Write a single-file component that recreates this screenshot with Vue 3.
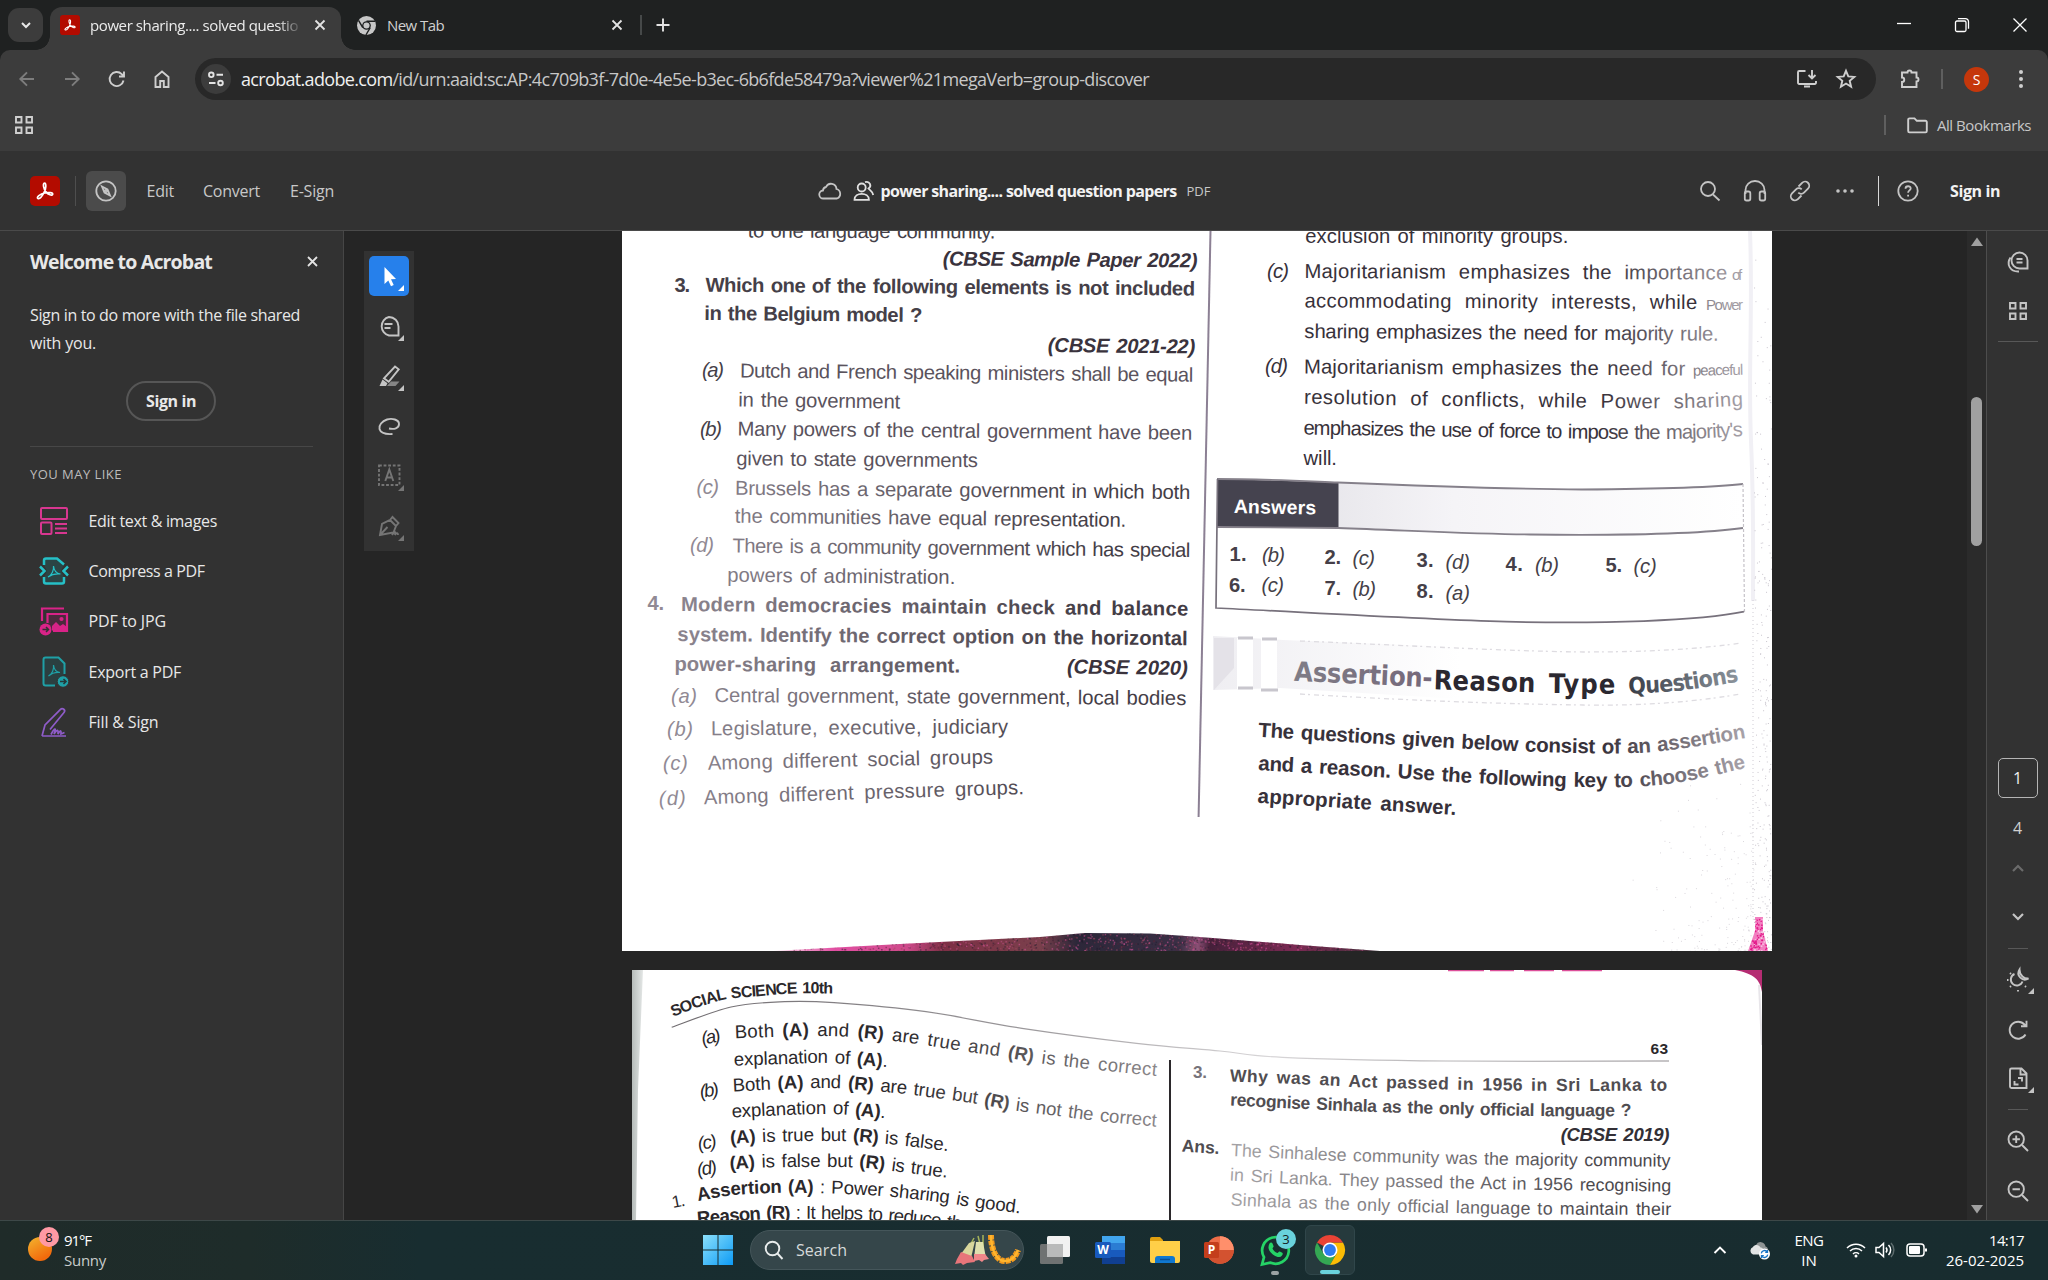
<script setup>
// Spreads an element's text over a given width through letter spacing.
const vFit = {
  mounted(el, { value }) {
    const w = el.getBoundingClientRect().width
    const n = el.textContent.length
    el.style.letterSpacing = ((value - w) / n).toFixed(3) + 'px'
  }
}

// Justifies a line of text along its baseline curve.
const vJustify = {
  mounted(el, { value }) {
    const natural = el.getComputedTextLength()
    const text = el.textContent
    const spaces = text.split(' ').length - 1
    const spare = value - natural
    const word = spaces ? Math.max((spare * 0.6) / spaces, 1.5) : 0
    el.style.wordSpacing = word + 'px'
    el.style.letterSpacing = (spare - word * spaces) / Math.max(1, text.length - 1) + 'px'
  }
}

function curve(p) {
  const pts = []
  for (let i = 0; i < p.length; i += 2) pts.push([p[i], p[i + 1]])
  let d = `M${pts[0][0]} ${pts[0][1]}`
  for (let i = 0; i < pts.length - 1; i++) {
    const a = pts[i - 1] || pts[i], b = pts[i], c = pts[i + 1], e = pts[i + 2] || c
    d += `C${b[0] + (c[0] - a[0]) / 6} ${b[1] + (c[1] - a[1]) / 6} ${c[0] - (e[0] - b[0]) / 6} ${c[1] - (e[1] - b[1]) / 6} ${c[0]} ${c[1]}`
  }
  const l = pts[pts.length - 1], k = pts[pts.length - 2]
  const len = Math.hypot(l[0] - k[0], l[1] - k[1])
  d += `L${l[0] + ((l[0] - k[0]) / len) * 14} ${l[1] + ((l[1] - k[1]) / len) * 14}`
  return d
}
function length(p) {
  let s = 0
  for (let i = 2; i < p.length; i += 2) s += Math.hypot(p[i] - p[i - 2], p[i + 1] - p[i - 1])
  return s
}
function build(prefix, rows) {
  return rows.map(([t, cls, p], i) => ({
    id: prefix + i, cls, d: curve(p), len: length(p),
    runs: t.split('*').map((s, k) => ({ s, bold: k % 2 === 1 })).filter(r => r.s)
  }))
}

const page1 = build('a', [
  ['to one language community.', '', [748, 237.5, 995, 238.5]],
  ['(CBSE Sample Paper 2022)', 'bi', [943, 265.5, 1197, 267.5]],
  ['3.', 'b', [674.5, 291.7, 690, 291.7]],
  ['Which one of the following elements is not included', 'b', [705.5, 291.7, 1195, 295.5]],
  ['in the Belgium model ?', 'b', [704.5, 320, 922, 322]],
  ['(CBSE 2021-22)', 'bi', [1048, 352, 1195, 353.5]],
  ['(a)', 'i', [702, 377, 724, 377]],
  ['Dutch and French speaking ministers shall be equal', 'up', [740, 377.5, 1193, 381.7]],
  ['in the government', 'up', [738.5, 406.5, 900, 408.5]],
  ['(b)', 'i', [700, 435.5, 722, 435.5]],
  ['Many powers of the central government have been', 'up', [737.6, 435.5, 1192, 439.8]],
  ['given to state governments', 'up', [736.5, 465.2, 977.5, 467.2]],
  ['(c)', 'i lt', [696.5, 494, 719, 494]],
  ['Brussels has a separate government in which both', 'fl', [735, 494.8, 1190, 499]],
  ['the communities have equal representation.', 'fl', [735, 522.7, 1126, 526.9]],
  ['(d)', 'i lt', [690, 551.7, 714, 551.7]],
  ['There is a community government which has special', 'fl', [732.5, 552.5, 1190, 557]],
  ['powers of administration.', 'fl', [727.5, 581.7, 955, 584]],
  ['4.', 'b lt', [647.5, 610.2, 664, 610.2]],
  ['Modern democracies maintain check and balance', 'b fl', [681, 611, 1188, 615.6]],
  ['system. Identify the correct option on the horizontal', 'b fl', [677.5, 641, 1187.5, 645.2]],
  ['power-sharing arrangement.', 'b fl', [674.5, 670.8, 960, 672.5]],
  ['(CBSE 2020)', 'bi', [1067, 673.5, 1187.5, 675]],
  ['(a)', 'i lt', [671, 702.5, 697, 702.5]],
  ['Central government, state government, local bodies', 'fl', [714.5, 702, 1186, 705]],
  ['(b)', 'i lt', [667, 735.6, 693, 735.6]],
  ['Legislature, executive, judiciary', 'fl', [711, 735.3, 1008, 733.4]],
  ['(c)', 'i lt', [663, 770.2, 688, 769.5]],
  ['Among different social groups', 'fl', [708, 769.7, 993, 763.5]],
  ['(d)', 'i lt', [659, 805.5, 686, 804.5]],
  ['Among different pressure groups.', 'fl', [704, 804.2, 1024, 794]],
  ['exclusion of minority groups.', 'dk', [1305.5, 243.3, 1568, 243.3]],
  ['(c)', 'i dk', [1267, 278.2, 1289, 278.2]],
  ['Majoritarianism emphasizes the importance', 'fr', [1304.5, 278, 1727, 279.5]],
  ['of', 'sm fr', [1732, 279.5, 1742, 279.5]],
  ['accommodating minority interests, while', 'dk', [1304.5, 307.5, 1697, 309]],
  ['Power', 'sm fr', [1706, 309.5, 1743, 309.5]],
  ['sharing emphasizes the need for majority rule.', 'fr', [1304.5, 338, 1718.5, 340.7]],
  ['(d)', 'i dk', [1265, 372.8, 1288, 372.8]],
  ['Majoritarianism emphasizes the need for', 'fr', [1304, 373.5, 1685, 375.5]],
  ['peaceful', 'sm fr', [1693, 375.7, 1743, 374.7]],
  ['resolution of conflicts, while Power sharing', 'fr', [1304, 403.7, 1640, 408.2, 1743, 405.7]],
  ["emphasizes the use of force to impose the majority's", 'fr', [1303.5, 434.5, 1640, 439, 1743, 436]],
  ['will.', 'dk', [1303.5, 465, 1337, 465]],
  ['Answers', 'b wh', [1233.7, 513, 1316, 514.5]],
  ['1.', 'b', [1229.5, 560.7, 1246.5, 560.7]], ['(b)', 'i', [1262, 561.5, 1285, 561.5]],
  ['2.', 'b', [1324.5, 563.7, 1341, 563.7]], ['(c)', 'i', [1352.5, 564.7, 1375, 564.7]],
  ['3.', 'b', [1416.5, 567.4, 1433.5, 567.4]], ['(d)', 'i', [1445.5, 568.7, 1470, 568.7]],
  ['4.', 'b', [1505.500, 570.5, 1522.6, 570.5]], ['(b)', 'i', [1535, 571.5, 1559, 571.5]],
  ['5.', 'b', [1605.500, 571.5, 1622, 571.5]], ['(c)', 'i', [1633.500, 572.5, 1656.6, 572.5]],
  ['6.', 'b', [1229, 591.500, 1245.500, 591.500]], ['(c)', 'i', [1261.500, 592.3, 1284, 592.3]],
  ['7.', 'b', [1324.500, 594.5, 1341, 594.5]], ['(b)', 'i', [1352.500, 595.7, 1376, 595.7]],
  ['8.', 'b', [1416.500, 598, 1433.500, 598]], ['(a)', 'i', [1445.500, 599.7, 1470, 599.7]],
  ['Assertion-', 'head pale', [1294, 680.7, 1432, 687.2]],
  ['Reason', 'head', [1433.5, 689.2, 1535, 692.4]],
  ['Type', 'head', [1549, 693, 1615, 693.7]],
  ['Questions', 'head soft', [1629, 694, 1685, 690, 1739, 681.5]],
  ['The questions given below consist of an assertion', 'b lg fr', [1258, 736.7, 1399, 745, 1533, 751.7, 1646, 752.5, 1746, 738]],
  ['and a reason. Use the following key to choose the', 'b lg fr', [1258, 770, 1395, 778, 1529, 785.7, 1655, 785.5, 1746, 768]],
  ['appropriate answer.', 'b lg dk', [1257.5, 802.7, 1455.6, 815]]
])

const page2 = build('b', [
  ['SOCIAL SCIENCE 10th', 'b cap', [673, 1016.7, 719.5, 1000.7, 759.7, 996, 794, 993.5, 833, 993.5]],
  ['(a)', 'i', [703, 1045, 721.5, 1041]],
  ['Both *(A)* and *(R)* are true and *(R)* is the correct', 'fp', [735, 1038.3, 806.8, 1036, 848.5, 1036.7, 884, 1040, 919.7, 1044.3, 960.6, 1050.7, 1001.5, 1056.7, 1036, 1062.7, 1091.5, 1069.3, 1156, 1076]],
  ['explanation of *(A)*.', '', [734, 1065.700, 784.6, 1064, 826.7, 1063, 887, 1067]],
  ['(b)', 'i', [701, 1098, 719.5, 1095]],
  ['Both *(A)* and *(R)* are true but *(R)* is not the correct', 'fp', [733, 1091.5, 801.8, 1088.3, 840, 1088.3, 873, 1091, 907, 1094.3, 946, 1099.3, 979.7, 1104.3, 1011, 1110, 1063, 1116.7, 1094.5, 1120.7, 1156, 1126.7]],
  ['explanation of *(A)*.', '', [732, 1117.5, 824.7, 1114, 885, 1118.3]],
  ['(c)', 'i', [699, 1150, 717.5, 1147]],
  ['*(A)* is true but *(R)* is false.', '', [730.5, 1144, 773, 1141.7, 844, 1141, 877, 1143.3, 897.5, 1145, 948, 1151]],
  ['(d)', 'i', [698, 1176, 717.5, 1173]],
  ['*(A)* is false but *(R)* is true.', '', [730, 1169.5, 773, 1167.3, 852, 1167.3, 884, 1170, 905, 1172.7, 947, 1177.7]],
  ['1.', 'n', [673, 1208, 686, 1205.5]],
  ['*Assertion (A)* : Power sharing is good.', '', [698, 1201, 734.8, 1195, 775, 1193, 809.5, 1193, 882, 1196, 949, 1203.3, 969, 1206.7, 1020, 1213.3]],
  ['*Reason (R)* : It helps to reduce the', '', [697.7, 1224.5, 756, 1219.8, 788, 1218.8, 865, 1219.8, 926, 1225, 970, 1231]],
  ['63', 'b tiny', [1650.500, 1053.7, 1668, 1053.7]],
  ['3.', 'b lt', [1193, 1078.3, 1207, 1078.3]],
  ['Why was an Act passed in 1956 in Sri Lanka to', 'b mid', [1230, 1081.5, 1309, 1084.5, 1376, 1087.7, 1521, 1090.7, 1667.3, 1090.7]],
  ['recognise Sinhala as the only official language ?', 'b mid', [1230, 1105.5, 1376, 1112, 1533.5, 1116, 1631.4, 1116]],
  ['(CBSE 2019)', 'bi', [1560.8, 1141, 1669.4, 1141]],
  ['Ans.', 'b mid', [1181.6, 1151.5, 1219, 1154]],
  ['The Sinhalese community was the majority community', 'fq', [1231, 1156, 1343.7, 1161, 1507, 1165, 1670, 1166.7]],
  ['in Sri Lanka. They passed the Act in 1956 recognising', 'fq', [1230, 1180.5, 1327, 1185.3, 1503, 1189.3, 1671, 1191.7]],
  ['Sinhala as the only official language to maintain their', 'fq', [1230.6, 1205.5, 1384.5, 1211.3, 1527, 1214.3, 1671, 1215]]
])
const headerLine = curve([671.7, 1027.3, 731, 1007, 784.6, 1001.7, 834, 1002.7, 926, 1011.7, 1022, 1028.3, 1136.6, 1043.3, 1220, 1051, 1282.4, 1057.3, 1445.7, 1061, 1655, 1061])

// Scanner grain, seeded so that it is the same on every load.
let seed = 7
const rnd = () => ((seed = (seed * 16807) % 2147483647) / 2147483647)
const many = (n, f) => Array.from({ length: n }, f)
const grain = [
  ...many(240, () => ({ x: 1754 + rnd() * 17, y: 231 + 720 * Math.sqrt(rnd()), c: '#c9c5cd' })),
  ...many(170, () => ({ x: 1754 - 140 * rnd() * rnd(), y: 951 - 180 * rnd() * rnd(), c: '#dad7dc' }))
]
const bandColors = ['#e857a8', '#5a2338', '#2a2233', '#a84a63', '#c8548e', '#1f1c2c', '#713045']
const bandGrain = many(1300, () => ({ x: 790 + rnd() * 580, y: 932 + rnd() * 19, c: bandColors[Math.floor(rnd() * 7)] }))
const pinkGrain = many(120, () => ({ x: 1749 + rnd() * 18, y: 918 + rnd() * 33, c: rnd() > 0.5 ? '#e3198a' : '#f8c4e4' }))

const suggestions = [
  { icon: 'edit', label: 'Edit text & images', w: 128.5 },
  { icon: 'compress', label: 'Compress a PDF', w: 116 },
  { icon: 'jpg', label: 'PDF to JPG', w: 77.5 },
  { icon: 'export', label: 'Export a PDF', w: 92.5 },
  { icon: 'sign', label: 'Fill & Sign', w: 70 }
]
</script>

<template>
  <div class="screen">
    <!-- tab strip -->
    <div class="tabs">
      <div class="tabsearch"><svg width="14" height="14" viewBox="0 0 14 14" class="ln w2"><path d="M3 5l4 4 4-4" /></svg></div>
      <div class="tab">
        <svg class="fav" width="20" height="20" viewBox="0 0 30 30"><rect width="30" height="30" rx="5" fill="#b30b00" /><path class="acro" d="M14.5 7.2c2 0 1.600 5.500-.3 9-1.800 3.700-4.600 6.900-6.300 6.200-2-1 2.300-4.500 6.800-5.400 3.900-.8 8.200-.6 8 1.300-.5 2-4.600.2-6.700-2.400-2.300-2.700-3.600-8.700-1.500-8.700z" /></svg>
        <div class="tabtitle"><span v-fit="208">power sharing.... solved questio</span></div>
        <svg class="tabx" width="12" height="12" viewBox="0 0 12 12"><path d="M1.500 1.500l9 9M10.500 1.500l-9 9" /></svg>
      </div>
      <div class="tab2">
        <svg width="19" height="19" viewBox="0 0 20 20"><circle cx="10" cy="10" r="10" fill="#c7c7c7" /><g stroke="#1f2121" stroke-width="1.500" fill="none"><path d="M10 5.500H19M6.100 12.200L1.600 4.500M13.900 12.200L9.400 20" /></g><circle cx="10" cy="10" r="4.600" fill="#1f2121" /><circle cx="10" cy="10" r="3.200" fill="#c7c7c7" /></svg>
        <span v-fit="57">New Tab</span>
        <svg class="tabx" width="12" height="12" viewBox="0 0 12 12"><path d="M1.500 1.500l9 9M10.500 1.500l-9 9" /></svg>
      </div>
      <i class="tabsep"></i>
      <svg class="plus" width="14" height="14" viewBox="0 0 14 14"><path d="M7 .5v13M.5 7h13" /></svg>
      <div class="winctl">
        <svg width="16" height="16" viewBox="0 0 16 16"><path d="M1 6.500h14" /></svg>
        <svg width="16" height="16" viewBox="0 0 16 16"><rect x="1.500" y="4" width="10.500" height="10.500" rx="1.500" /><path d="M4 1.700h7.500a3 3 0 013 3v7" /></svg>
        <svg width="16" height="16" viewBox="0 0 16 16"><path d="M1.500 1.500l13 13M14.500 1.500l-13 13" /></svg>
      </div>
    </div>

    <!-- address row -->
    <div class="navbg">
      <div class="nav">
        <div class="navicons">
          <svg class="dim" width="20" height="20" viewBox="0 0 20 20"><path d="M17 10H3.500M10 3.300L3.300 10l6.700 6.700" /></svg>
          <svg class="dim" width="20" height="20" viewBox="0 0 20 20"><path d="M3 10h13.500M10 3.300l6.700 6.700-6.700 6.700" /></svg>
          <svg width="20" height="20" viewBox="0 0 20 20"><path d="M16.500 11.500a7 7 0 11-1.800-6.300L17 7.500M17 2.500v5h-5" /></svg>
          <svg width="20" height="20" viewBox="0 0 20 20"><path d="M3.500 8L10 2.500 16.500 8v10h-4.700v-6H8.200v6H3.500z" /></svg>
        </div>
        <div class="url">
          <div class="site"><svg width="18" height="18" viewBox="0 0 18 18"><circle cx="4.300" cy="4.800" r="2.300" /><path d="M9.500 4.800H16M2 13h6.500" /><circle cx="13.500" cy="13" r="2.300" /></svg></div>
          <span v-fit="908"><b>acrobat.adobe.com</b>/id/urn:aaid:sc:AP:4c709b3f-7d0e-4e5e-b3ec-6b6fde58479a?viewer%21megaVerb=group-discover</span>
          <div class="urlicons">
            <svg width="22" height="20" viewBox="0 0 22 20"><path d="M9.500 2H3.200A1.200 1.200 0 002 3.200v10.600A1.200 1.200 0 003.200 15h15.600a1.200 1.200 0 001.200-1.200V12M16 1v8M12.500 6L16 9.500 19.500 6M8 17.500h6" /></svg>
            <svg width="20" height="20" viewBox="0 0 20 20"><path d="M10 1.800l2.300 5.600 6 .5-4.600 3.900 1.400 5.900L10 14.500l-5.100 3.200 1.400-5.900L1.700 7.900l6-.5z" /></svg>
          </div>
        </div>
        <svg class="puzzle" width="22" height="22" viewBox="0 0 22 22"><path d="M3 4.500h5.500a2 2 0 014 0H17.500v5a2 2 0 010 4v5.500H3v-5a2.200 2.200 0 000-4.500z" /></svg>
        <i class="vsep"></i>
        <div class="avatar">S</div>
        <svg class="kebab" width="6" height="20" viewBox="0 0 6 20"><circle cx="3" cy="3" r="2" /><circle cx="3" cy="10" r="2" /><circle cx="3" cy="17" r="2" /></svg>
      </div>
      <div class="marks">
        <svg class="apps" width="20" height="20" viewBox="0 0 20 20"><path d="M2 2h5.500v5.500H2zM12.500 2H18v5.500h-5.500zM2 12.500h5.500V18H2zM12.500 12.500H18V18h-5.500z" /></svg>
        <i class="vsep"></i>
        <svg class="folder" width="21" height="17" viewBox="0 0 21 17"><path d="M1.200 14V2.700A1.300 1.300 0 012.500 1.400h5l2.300 2.400h8.700a1.300 1.300 0 011.300 1.300V14a1.400 1.400 0 01-1.300 1.400h-16A1.400 1.400 0 011.200 14z" /></svg>
        <span v-fit="94">All Bookmarks</span>
      </div>
    </div>

    <!-- Acrobat header -->
    <div class="ahead">
      <div class="aleft">
        <svg width="30" height="30" viewBox="0 0 30 30"><rect width="30" height="30" rx="5" fill="#b30b00" /><path class="acro" d="M14.500 7.200c2 0 1.600 5.500-.3 9-1.800 3.700-4.600 6.900-6.300 6.200-2-1 2.300-4.500 6.800-5.400 3.900-.8 8.200-.6 8 1.300-.5 2-4.600.2-6.700-2.400-2.300-2.700-3.600-8.700-1.500-8.700z" /></svg>
        <i></i>
        <div class="compass"><svg width="22" height="22" viewBox="0 0 22 22"><circle cx="11" cy="11" r="9.700" /><path d="M7 6.500l5.500 3 2.500 6-5.500-3z" /><circle cx="11" cy="11" r="1.200" /></svg></div>
        <span class="m1" v-fit="27.500">Edit</span><span class="m2" v-fit="57">Convert</span><span class="m3" v-fit="44">E-Sign</span>
      </div>
      <div class="acenter">
        <svg width="24" height="20" viewBox="0 0 24 20"><path d="M5.500 17.500a4 4 0 01-.5-8 3.800 3.800 0 013-3.500 5.500 5.500 0 0110.500 2 5 5 0 01.5 9.500z" /></svg>
        <svg class="ppl" width="22" height="22" viewBox="0 0 22 22"><circle cx="8.700" cy="7.500" r="4" /><path d="M1.500 19.800c0-8 14.400-8 14.400 0zM12 2.200c5-1.700 7 4.200 3.500 6.300 1.500 2 4 2.500 4.700 6.500" /></svg>
        <b v-fit="296">power sharing.... solved question papers</b>
        <small v-fit="24">PDF</small>
      </div>
      <div class="aright">
        <svg width="22" height="22" viewBox="0 0 22 22"><circle cx="9" cy="9" r="7" /><path d="M14 14.500l6.500 6" /></svg>
        <svg width="24" height="22" viewBox="0 0 24 22"><path d="M2.500 14V10a9.500 9 0 0119 0v4" /><rect x="1.800" y="11.500" width="5.500" height="9" rx="1.800" /><rect x="16.700" y="11.500" width="5.500" height="9" rx="1.800" /></svg>
        <svg width="22" height="22" viewBox="0 0 22 22"><path d="M9.500 6.500l3.600-3.700a4 4 0 015.900 5.800l-4 4a4 4 0 01-5.700 0M12.500 15.500l-3.600 3.700a4 4 0 01-5.900-5.800l4-4a4 4 0 015.700 0" /></svg>
        <svg class="dots" width="20" height="6" viewBox="0 0 20 6"><circle cx="3" cy="3" r="1.800" /><circle cx="10" cy="3" r="1.800" /><circle cx="17" cy="3" r="1.800" /></svg>
        <i></i>
        <svg class="help" width="22" height="22" viewBox="0 0 22 22"><circle cx="11" cy="11" r="9.700" /><path d="M8.500 8.700c0-3.300 5.200-3.200 5.200-.2 0 1.900-2.600 2-2.600 4.200M11.100 14.800v1.700" /></svg>
        <b v-fit="50">Sign in</b>
      </div>
    </div>

    <div class="body">
      <!-- welcome panel -->
      <aside class="panel">
        <div class="ptitle"><b v-fit="182">Welcome to Acrobat</b>
          <svg class="tabx" width="11" height="11" viewBox="0 0 11 11"><path d="M1 1l9 9M10 1l-9 9" /></svg>
        </div>
        <p><span v-fit="270">Sign in to do more with the file shared</span><br><span v-fit="66">with you.</span></p>
        <div class="signin"><b v-fit="50">Sign in</b></div>
        <hr>
        <h4><span v-fit="92">YOU MAY LIKE</span></h4>
        <div v-for="s in suggestions" :key="s.icon" class="sug">
          <svg v-if="s.icon === 'edit'" width="30" height="30" viewBox="0 0 30 30" stroke="#d83790" stroke-width="2" fill="#4a3040"><rect x="2" y="2" width="26" height="11" rx="1" /><rect x="2" y="16.500" width="10.500" height="11.500" rx="1" /><path d="M16 18h12M16 22.500h12M16 27h12" /></svg>
          <svg v-else-if="s.icon === 'compress'" width="30" height="30" viewBox="0 0 30 30" stroke="#26c0c7" stroke-width="2" fill="none"><path d="M5 9V4.500A2 2 0 017 2.500h11l7 6L22 15l3 6v4.500a2 2 0 01-2 2H7a2 2 0 01-2-2V21l3-6z" fill="#2b4445" stroke="none" /><path d="M5 9V4.500A2 2 0 017 2.500h11l7 6M5 21v4.500a2 2 0 002 2h16a2 2 0 002-2V21" stroke-width="2.500" /><path d="M1 10.500L5.500 15 1 19.500M29 10.500L24.500 15 29 19.500" stroke-width="2.500" /><path d="M9 21c4-2 6-7 5.500-11 .5 5 3 7.500 7 8-4-.5-9 .5-12.500 3z" stroke-width="1.200" /></svg>
          <svg v-else-if="s.icon === 'jpg'" width="30" height="30" viewBox="0 0 30 30" stroke="#d92388" stroke-width="2.200" fill="none"><path d="M3 15V2.500h22" /><path d="M8.500 17V8H28v17H14" fill="#4b2a3d" /><path d="M13 24v-4l4-4 4 4 3-2 4 3v4H14z" fill="#d92388" stroke="none" /><circle cx="22.500" cy="13" r="1" fill="#d92388" /><circle cx="6.500" cy="23.500" r="6" fill="#d92388" stroke="none" /><path d="M3.500 23.500h6M7 21l2.500 2.500L7 26" stroke="#323232" stroke-width="1.500" /></svg>
          <svg v-else-if="s.icon === 'export'" width="30" height="32" viewBox="0 0 30 32" stroke="#1fa0a6" stroke-width="2" fill="none"><path d="M16 29.500H6.500a2 2 0 01-2-2V3.500a2 2 0 012-2h13l6 6V18" fill="#2b3f40" /><path d="M9.500 20c4-2 5.500-7 5-11 .5 5 2.500 7 6.500 7.500-4-.5-8.500 1-11.500 3.500z" stroke-width="1.200" /><circle cx="24" cy="25.500" r="5.800" fill="#1fa0a6" stroke="#323232" stroke-width="1" /><path d="M21 25.500h6M24.500 23l2.500 2.500-2.500 2.500" stroke="#26393a" stroke-width="1.600" /></svg>
          <svg v-else width="30" height="30" viewBox="0 0 30 30" stroke="#8f5cc9" stroke-width="1.700" fill="none"><path d="M3 29l3-11L21.500 2.300c2-2 5.500.8 3.500 3.200L11 22.500M3 29h24" /><path d="M12 27.500c3-6 5-7 4-3.500l-1 3c2-3 4-5 4-2.500v2.500c1.500-3 3-4 3-2v2l3.500-1.500" stroke-width="1.700" /></svg>
          <span v-fit="s.w">{{ s.label }}</span>
        </div>
      </aside>

      <!-- document -->
      <main class="viewer">
        <div class="tools">
          <div class="tool on"><svg width="40" height="40" viewBox="0 0 40 40"><path d="M15.500 11v17l3.800-3.600 2.700 5.800 2.700-1.200-2.700-5.700 5-.3z" fill="#fff" /><path d="M35 29v6h-6z" fill="#fff" /></svg></div>
          <div class="tool"><svg width="40" height="40" viewBox="0 0 40 40" class="tl"><path d="M20 11a9.500 9.500 0 019.500 9.500v9H20A9.500 9.500 0 0120 11zM15.500 18h8M15.500 22h6" /><path class="tri" d="M35 29v6h-6z" /></svg></div>
          <div class="tool"><svg width="40" height="40" viewBox="0 0 40 40" class="tl"><path d="M26 10.500l3.700 2.800-10 12.500-4.700-3.500z" /><path class="tri" d="M13.500 23.500l5 3.700-1.500 2.800h-6.500z" /><path d="M22 25.500h8.500l-4 4.500H18z" fill="#858585" stroke="none" /><path class="tri" d="M35 29v6h-6z" /></svg></div>
          <div class="tool"><svg width="40" height="40" viewBox="0 0 40 40" class="tl"><path d="M20 22.500c5 1 10 0 10-4.500S23 12 18 13.500s-8.500 6-7.500 9.500 5.500 5.500 13 5" /></svg></div>
          <div class="tool off"><svg width="40" height="40" viewBox="0 0 40 40" class="tl"><rect x="10" y="9.500" width="20.500" height="19.500" stroke-dasharray="2.800 1.800" /><path d="M16.300 25l4-11.500 4 11.500M17.500 21.500h5.500" /><path class="tri" d="M35 29v6h-6z" /></svg></div>
          <div class="tool off"><svg width="40" height="40" viewBox="0 0 40 40" class="tl"><path d="M11 29l2-11 8-4 6 6-2.500 6.500zM11 29l7.500-8M21 14l2.500-3 6 6-2.500 3M23 29c3-5 4-3 3 0 2-3 3-2 3 0" /><path class="tri" d="M35 29v6h-6z" /></svg></div>
        </div>

        <div class="pages">
          <svg class="page" width="1150" height="720" viewBox="622 231 1150 720">
            <defs>
              <linearGradient id="fl" gradientUnits="userSpaceOnUse" x1="690" x2="1100" y1="0" y2="0"><stop offset="0" stop-color="#8a838d" /><stop offset="1" stop-color="#433d45" /></linearGradient>
              <linearGradient id="fr" gradientUnits="userSpaceOnUse" x1="1600" x2="1745" y1="0" y2="0"><stop offset="0" stop-color="#37313a" /><stop offset="1" stop-color="#a8a3aa" /></linearGradient>
              <linearGradient id="band"><stop offset="0" stop-color="#fbe3f0" /><stop offset=".1" stop-color="#e24fa3" /><stop offset=".22" stop-color="#cf4a8b" /><stop offset=".28" stop-color="#7d2f45" /><stop offset=".44" stop-color="#7a404c" /><stop offset=".5" stop-color="#2c2739" /><stop offset=".67" stop-color="#3a2f45" /><stop offset=".7" stop-color="#8a4f74" /><stop offset=".72" stop-color="#45203a" /><stop offset=".86" stop-color="#7c2a54" /><stop offset="1" stop-color="#40303a" /></linearGradient>
              <linearGradient id="ans"><stop offset="0" stop-color="#dddce2" /><stop offset=".45" stop-color="#f5f4f7" /><stop offset="1" stop-color="#fff" /></linearGradient>
              <linearGradient id="ttb"><stop offset="0" stop-color="#efeef2" /><stop offset="1" stop-color="#fff" /></linearGradient>
              <linearGradient id="ttl" gradientUnits="userSpaceOnUse" x1="1295" x2="1432" y1="0" y2="0"><stop offset="0" stop-color="#7f7c86" /><stop offset="1" stop-color="#75687a" /></linearGradient>
              <linearGradient id="ttr" gradientUnits="userSpaceOnUse" x1="1629" x2="1739" y1="0" y2="0"><stop offset="0" stop-color="#3a3e48" /><stop offset="1" stop-color="#8c949c" /></linearGradient>
              <clipPath id="bandclip"><path d="M773 951L900 944 1040 937 1085 933 1150 933.500 1200 937 1300 945 1380 951z" /></clipPath>
              <clipPath id="pinkclip"><path d="M1755 917h8v14l5 20h-20l7-20z" /></clipPath>
            </defs>
            <rect x="622" y="231" width="1150" height="720" fill="#fff" />
            <path d="M1750 231c3 80-2 140 1 210s2 120 2 160" stroke="#f1f0f5" stroke-width="4" fill="none" />
            <path d="M1753 600V920" stroke="#cfccd4" stroke-width="1" stroke-dasharray="1 3" />
            <rect v-for="(g, i) in grain" :key="'g' + i" :x="g.x" :y="g.y" width="1" height="1" :fill="g.c" />
            <path d="M1210.500 231L1198.600 817" stroke="#8c8094" stroke-width="2" />
            <path d="M1217 480C1260 480 1300 482 1338 483 1420 486 1510 488 1582 488.500 1650 488 1710 487 1743 484V528C1650 536 1560 535.500 1530 534.500L1338 528z" fill="url(#ans)" />
            <path d="M1217 479L1338.500 482.500V528L1217 527z" fill="#45434f" />
            <path d="M1217 479C1260 479 1300 481 1338 482.500 1420 486 1510 489 1582 489.500 1650 489 1710 488 1743 484M1217 527L1338 528C1420 531 1480 534 1530 534.500 1620 535.500 1700 534 1743 528" stroke="#85808a" stroke-width="1.800" fill="none" />
            <path d="M1217.500 479L1216 608C1300 612 1420 619 1506 621.700 1600 624 1700 621 1744 611.700" stroke="#77717c" stroke-width="1.700" fill="none" />
            <path d="M1743 484L1744.500 612" stroke="#c5c2c8" stroke-width="1.200" stroke-dasharray="3 2" />
            <path d="M1213 636L1283 640 1460 647 1460 699 1280 688 1213 690z" fill="url(#ttb)" />
            <path d="M1214 638h20v30l-20 22z" fill="#e4e2e8" />
            <rect x="1237" y="638" width="16" height="51" fill="#fff" /><rect x="1261" y="638" width="16" height="51" fill="#fff" />
            <path d="M1238 638h15M1262 639h15M1238 688h15M1261 690h17" stroke="#c8c6cd" stroke-width="3" />
            <path d="M1300 641C1400 645 1500 651 1583 652 1650 652 1700 649 1741 643M1300 694C1400 700 1500 704 1583 705 1650 706 1700 701 1740 694" stroke="#dedce1" stroke-width="1.300" stroke-dasharray="5 3 2 4" fill="none" />
            <g clip-path="url(#bandclip)"><rect x="773" y="930" width="607" height="22" fill="url(#band)" /><rect v-for="(g, i) in bandGrain" :key="'b' + i" :x="g.x" :y="g.y" width="1.500" height="1.500" :fill="g.c" opacity=".5" /></g>
            <g clip-path="url(#pinkclip)"><rect x="1745" y="915" width="25" height="36" fill="#f27fc0" /><rect v-for="(g, i) in pinkGrain" :key="'p' + i" :x="g.x" :y="g.y" width="1.500" height="1.500" :fill="g.c" /></g>
            <g class="scan">
              <template v-for="l in page1" :key="l.id"><path :id="l.id" :d="l.d" fill="none" /><text v-justify="l.len" :class="l.cls"><textPath :href="'#' + l.id"><tspan v-for="(r, k) in l.runs" :key="k" :class="{ b: r.bold }">{{ r.s }}</tspan></textPath></text></template>
            </g>
          </svg>
          <svg class="page p2" width="1130" height="250" viewBox="632 970 1130 250">
            <defs>
              <linearGradient id="fp" gradientUnits="userSpaceOnUse" x1="900" x2="1160" y1="0" y2="0"><stop offset="0" stop-color="#2b282b" /><stop offset="1" stop-color="#8b888b" /></linearGradient>
              <linearGradient id="fq" gradientUnits="userSpaceOnUse" x1="1230" x2="1600" y1="0" y2="0"><stop offset="0" stop-color="#a5a3a6" /><stop offset="1" stop-color="#4a474c" /></linearGradient>
              <linearGradient id="edge"><stop offset="0" stop-color="#b6bcba" /><stop offset="1" stop-color="#e4e7e6" /></linearGradient>
              <linearGradient id="rule" gradientUnits="userSpaceOnUse" x1="672" x2="1668" y1="0" y2="0"><stop offset="0" stop-color="#6f6b6f" /><stop offset=".35" stop-color="#9a979a" /><stop offset=".6" stop-color="#d8d6d8" /><stop offset=".8" stop-color="#b4b2b4" /><stop offset="1" stop-color="#8e8a8e" /></linearGradient>
            </defs>
            <rect x="632" y="970" width="1130" height="250" fill="#fff" />
            <path d="M632 970h11l-5 120-2 130h-4z" fill="url(#edge)" />
            <path d="M1448 970.500h36M1490 970.500h24M1524 970.500h30M1562 970.500h40" stroke="#dd4f9a" stroke-width="1.500" />
            <path d="M1735 970h27v22c-2-12-7-18-27-22z" fill="#b52c72" />
            <path d="M1759 985l3 60" stroke="#e8e6ea" stroke-width="2" />
            <path :d="headerLine" stroke="url(#rule)" stroke-width="1.200" fill="none" />
            <path d="M1170 1060V1220" stroke="#2b282b" stroke-width="2" />
            <g class="scan second">
              <template v-for="l in page2" :key="l.id"><path :id="l.id" :d="l.d" fill="none" /><text v-justify="l.len" :class="l.cls"><textPath :href="'#' + l.id"><tspan v-for="(r, k) in l.runs" :key="k" :class="{ b: r.bold }">{{ r.s }}</tspan></textPath></text></template>
            </g>
          </svg>
        </div>
        <div class="scroll">
          <svg width="14" height="12" viewBox="0 0 14 12"><path d="M7 1.500L13 10H1z" /></svg>
          <i></i>
          <svg width="14" height="12" viewBox="0 0 14 12"><path d="M7 10.500L13 2H1z" /></svg>
        </div>
      </main>

      <!-- right rail -->
      <aside class="rail">
        <svg class="r-com" width="22" height="22" viewBox="0 0 22 22"><path d="M12.500 1.500A8 8 0 0120.500 9.500v8h-8a8 8 0 010-16zM9.500 8h6M9.500 11.500h6" /><path d="M3.500 6.500C-1 13 3 21 12 20.500" /></svg>
        <svg class="r-grid" width="20" height="20" viewBox="0 0 20 20"><path d="M2 2h5.500v5.500H2zM12.500 2H18v5.500h-5.500zM2 12.500h5.500V18H2zM12.500 12.500H18V18h-5.500z" /></svg>
        <i class="wide"></i>
        <div class="pageno">1</div>
        <div class="total">4</div>
        <svg class="r-up" width="14" height="10" viewBox="0 0 14 10"><path d="M2 8l5-5 5 5" /></svg>
        <svg class="r-dn" width="14" height="10" viewBox="0 0 14 10"><path d="M2 2l5 5 5-5" /></svg>
        <i class="s1"></i>
        <svg class="r-sun" width="34" height="28" viewBox="0 0 34 28"><path d="M13.500 8a6 6 0 108 7.500" /><path d="M18.500 3.500a6.500 6.500 0 009 9c-4 .5-9-3-9-9z" /><path d="M6 14h1.500M9 7l1 1M9 21l1-1M17 24v1.500M24 20l1 1" /><path class="tri" d="M33 22v6h-6z" /></svg>
        <svg class="r-rot" width="22" height="22" viewBox="0 0 22 22"><path d="M18.500 15.500a8.500 8.500 0 11-1-10L19.500 7M19.500 1.800v5.500H14" /></svg>
        <svg class="r-fit" width="34" height="28" viewBox="0 0 34 28"><path d="M10.500 3.500h10l5 5v14.500h-1.500H10.500A1.500 1.500 0 019 21.500V5a1.500 1.500 0 011.500-1.500zM19.500 4v5.500h5.500M17 13h4v3.500M17.500 19.500h-4V16" /><path class="tri" d="M33 22v6h-6z" /></svg>
        <i class="s2"></i>
        <svg class="r-zi" width="22" height="22" viewBox="0 0 22 22"><circle cx="9.200" cy="9.200" r="7.700" /><path d="M15 15l6 6M5.500 9.200h7.400M9.200 5.500v7.400" /></svg>
        <svg class="r-zo" width="22" height="22" viewBox="0 0 22 22"><circle cx="9.200" cy="9.200" r="7.700" /><path d="M15 15l6 6M5.500 9.200h7.400" /></svg>
      </aside>
    </div>

    <!-- taskbar -->
    <footer class="task">
      <div class="weather">
        <div class="sun"><em>8</em></div>
        <div class="wtext"><span v-fit="27">91°F</span><br><span class="g" v-fit="42">Sunny</span></div>
      </div>
      <div class="center">
        <svg width="30" height="30" viewBox="0 0 30 30"><defs><linearGradient id="win" x1="0" y1="0" x2="30" y2="30" gradientUnits="userSpaceOnUse"><stop offset="0" stop-color="#8be0fb" /><stop offset="1" stop-color="#0d9bf5" /></linearGradient></defs><path d="M0 0h14.500v14.500H0zM15.500 0H30v14.500H15.500zM0 15.500h14.500V30H0zM15.500 15.500H30V30H15.500z" fill="url(#win)" /></svg>
        <div class="search">
          <svg width="20" height="20" viewBox="0 0 20 20"><circle cx="8.500" cy="8.500" r="6.800" /><path d="M13.500 13.500l5 5.500" /></svg>
          <span v-fit="51">Search</span>
          <svg class="flowers" width="66" height="32" viewBox="0 0 66 32">
            <path d="M20 4L14 15M24 2l3 12M29 1v13" stroke="#a6b45a" stroke-width="1.500" />
            <path d="M15 9l6-2-4 17-10-4z" fill="#d9d79c" /><path d="M22 8h7l3 16h-12z" fill="#dfe0ae" />
            <path d="M7 18l11 4 3 6-8 1-4 2-2-2-6 1 2-5z" fill="#e8757a" /><path d="M20 20h11l4 5-5 1-2 2-3-2-5 1z" fill="#f0878a" />
            <path d="M37 1c0 14 5 26 14 26 7 0 11-5 13-11" stroke="#f39a1d" stroke-width="6" fill="none" stroke-dasharray="4.500 1" /><path d="M37 1c0 14 5 26 14 26 7 0 11-5 13-11" stroke="#ffb52e" stroke-width="2.500" fill="none" />
          </svg>
        </div>
        <svg class="tv" width="30" height="28" viewBox="0 0 30 28"><rect x="7" y="0" width="23" height="21" rx="1.500" fill="#f1f1f1" /><rect x="0" y="8" width="23" height="20" rx="1.500" fill="#6f7272" /><path d="M7 8h16v13H7z" fill="#b9baba" /></svg>
        <svg class="word" width="30" height="28" viewBox="0 0 30 28"><path d="M7 0h23v7H7z" fill="#41a5ee" /><path d="M7 7h23v7H7z" fill="#2b7cd3" /><path d="M7 14h23v7H7z" fill="#185abd" /><path d="M7 21h23v7H7z" fill="#103f91" /><rect y="6" width="16" height="16" rx="1.500" fill="#185abd" /><text x="8" y="18" text-anchor="middle">W</text></svg>
        <svg class="exp" width="30" height="28" viewBox="0 0 30 28"><path d="M0 3a2 2 0 012-2h8l3 3v4H0z" fill="#e0a010" /><path d="M0 5h30v20a2 2 0 01-2 2H2a2 2 0 01-2-2z" fill="#ffcf48" /><path d="M5 27v-4a3 3 0 013-3h14a3 3 0 013 3v4z" fill="#1078d0" /><path d="M10 23.500h10" stroke="#0a4f94" stroke-width="1.500" /></svg>
        <svg class="ppt" width="30" height="28" viewBox="0 0 30 28"><circle cx="16" cy="14" r="13.800" fill="#ed6c47" /><path d="M16 .2A13.800 13.800 0 0129.800 14H16z" fill="#ff8f6b" /><path d="M2.200 14h27.600A13.800 13.800 0 012.200 14z" fill="#d35230" /><rect y="6" width="15" height="16" rx="1.500" fill="#c43e1c" /><text x="7.500" y="18" text-anchor="middle">P</text></svg>
        <div class="wa">
          <svg width="30" height="31" viewBox="0 0 30 31"><path d="M2 29.500l2-7.300A13.300 13.300 0 1110 27.600z" fill="none" stroke="#25d366" stroke-width="2.700" /><path d="M9.500 8.500c1-1.500 2.500-1 3 0l1 2.500c.5 1-1 1.500-1 2.500 1 2.300 2.500 3.600 4.800 4.500 1 0 1.500-2 2.500-1.500l2.500 1.200c1.300.8-.3 4-3 4.300-5 .3-11.300-6-10.800-10 .1-1.500.5-2.700 1-3.500z" fill="#25d366" /></svg>
          <em>3</em><i></i>
        </div>
        <div class="chrome">
          <svg width="30" height="30" viewBox="0 0 30 30"><path d="M2 7.500L8.500 18.700 15 15v0L21.500 18.700 15 30A15 15 0 012 7.500z" fill="#34a853" /><path d="M15 7.500h13A15 15 0 0115 30l6.500-11.300z" fill="#fbbc05" /><path d="M2 7.500A15 15 0 0128 7.500H15L8.500 11z" fill="#ea4335" /><circle cx="15" cy="15" r="7.500" fill="#fff" /><circle cx="15" cy="15" r="5.900" fill="#2e7bf0" /></svg><i></i>
        </div>
      </div>
      <div class="tray">
        <svg class="caret" width="14" height="10" viewBox="0 0 14 10"><path d="M1.500 8L7 2.500 12.500 8" /></svg>
        <svg class="cloud" width="22" height="20" viewBox="0 0 22 20"><path d="M7 5a5 5 0 019.500 1.500c3.500.5 3 6.500 0 6.500z" fill="#8f9494" /><path d="M4 14.500a4 4 0 010-7.500c2-3 6-2.500 7.500.5 4 0 4 7 0 7z" fill="#e2e4e4" /><circle cx="15.500" cy="14" r="5.500" fill="#fff" /><path d="M12.300 13.300a3.300 3.300 0 016-1.300M18.700 14.700a3.300 3.300 0 01-6 1.300M18.500 10v2.300h-2.300M12.500 18v-2.300h2.300" stroke="#1673c5" stroke-width="1.300" fill="none" /></svg>
        <div class="lang"><span v-fit="29">ENG</span><br>IN</div>
        <svg class="wifi" width="20" height="16" viewBox="0 0 20 16"><path d="M1 6a12.500 12.500 0 0118 0M4 9a8.400 8.400 0 0112 0M7 12a4.300 4.300 0 016 0" /><circle cx="10" cy="14" r="1.500" fill="#fff" stroke="none" /></svg>
        <svg class="vol" width="20" height="16" viewBox="0 0 20 16"><path d="M1 5.500h3L8.500 1.500v13L4 10.500H1zM11 5.500a4 4 0 010 5M13.500 3a7 7 0 010 10" /><path d="M16 1a10 10 0 010 14" opacity=".3" /></svg>
        <svg class="bat" width="21" height="14" viewBox="0 0 21 14"><rect x="1" y="1" width="17" height="12" rx="3" /><rect x="3" y="3" width="11" height="8" rx="1" fill="#fff" stroke="none" /><path d="M20 5.500v3" stroke-width="2" /></svg>
        <div class="clock"><span v-fit="35">14:17</span><br><span v-fit="78">26-02-2025</span></div>
      </div>
    </footer>
  </div>
</template>

<style>
html, body { margin: 0; overflow: hidden; background: #252525; }
</style>

<style scoped>
* { box-sizing: border-box; }
.screen { width: 2048px; height: 1280px; display: flex; flex-direction: column; overflow: hidden; font-family: "Open Sans", "Noto Sans", sans-serif; color: #e3e3e3; }
svg { display: block; flex: none; fill: none; overflow: visible; }
i, em { font-style: normal; flex: none; }
span, b, small { white-space: nowrap; }

.tabs { height: 50px; flex: none; display: flex; background: #1f2121; padding-left: 8px; align-items: flex-start; position: relative; z-index: 1; }
.tabsearch { width: 35px; height: 34px; margin-top: 8px; border-radius: 11px; background: #3c3c3c; display: flex; align-items: center; justify-content: center; }
.tabsearch svg { stroke: #e8e8e8; stroke-width: 2; }
.tab { position: relative; width: 291px; height: 43px; margin: 7px 0 0 7px; border-radius: 12px 12px 0 0; background: #3c3c3c; display: flex; align-items: center; padding: 0 0 7px 10px; }
.tab::before, .tab::after { content: ""; position: absolute; bottom: 0; width: 14px; height: 14px; }
.tab::before { left: -14px; background: radial-gradient(circle at 0 0, transparent 13.5px, #3c3c3c 14px); }
.tab::after { right: -14px; background: radial-gradient(circle at 100% 0, transparent 13.5px, #3c3c3c 14px); }
.acro { stroke: #fff; stroke-width: 1.7; fill: none; }
.tabtitle { width: 209px; margin-left: 10px; font-size: 15px; color: #ececec; -webkit-mask-image: linear-gradient(90deg, #000 90%, rgba(0,0,0,.15)); mask-image: linear-gradient(90deg, #000 90%, rgba(0,0,0,.15)); }
.tab .tabx { margin-left: 15px; }
.tabx { stroke: #e3e3e3; stroke-width: 1.8; }
.tab2 { width: 283px; height: 36px; margin: 7px 0 0 16px; display: flex; align-items: center; font-size: 15px; color: #d0d0d0; }
.tab2 span { margin-left: 11px; }
.tab2 .tabx { margin-left: auto; margin-right: 17px; }
.tabsep { width: 2px; height: 20px; margin-top: 15px; background: #464949; }
.plus { margin: 18px 0 0 14px; stroke: #e3e3e3; stroke-width: 1.9; }
.winctl { margin-left: auto; padding-right: 20px; display: flex; gap: 42px; margin-top: 17px; }
.winctl svg { stroke: #fff; stroke-width: 1.3; }

.navbg { height: 101px; flex: none; background: #3c3c3c; border-radius: 10px 10px 0 0; box-shadow: 0 -8px 0 0 #1f2121; position: relative; z-index: 0; }
.nav { display: flex; align-items: center; height: 58px; }
.navicons { display: flex; width: 195px; padding-left: 17px; gap: 25px; }
.navicons svg, .url svg, .puzzle, .apps, .folder { stroke: #cfcfcf; stroke-width: 1.9; }
.navicons .dim { stroke: #7d7d7d; }
.url { width: 1681px; height: 42px; border-radius: 21px; background: #282828; display: flex; align-items: center; padding: 0 20px 0 6px; font-size: 18px; color: #c7c7c7; }
.url b { font-weight: 400; color: #f0f0f0; }
.site { width: 30px; height: 30px; border-radius: 50%; background: #3c3c3c; display: flex; align-items: center; justify-content: center; margin-right: 10px; }
.site svg { stroke: #e3e3e3; }
.urlicons { margin-left: auto; display: flex; gap: 18px; }
.puzzle { margin-left: 23px; }
.nav .vsep { margin-left: 20px; }
.vsep { width: 2px; height: 20px; background: #5f5f5f; }
.avatar { width: 25px; height: 25px; border-radius: 50%; background: #c5370b; margin-left: 21px; text-align: center; font-size: 14px; line-height: 25px; color: #fff; }
.kebab { margin-left: 29px; fill: #cfcfcf; }
.marks { display: flex; align-items: center; height: 34px; padding: 0 17px 0 14px; font-size: 15px; color: #c7c7c7; }
.marks .vsep { margin-left: auto; }
.folder { margin: 0 9px 0 21px; }

.ahead { height: 80px; flex: none; background: #323232; border-bottom: 1px solid #4a4a4a; display: flex; align-items: center; position: relative; font-size: 16px; color: #c8c8c8; }
.aleft { width: 818px; padding-left: 30px; display: flex; align-items: center; }
.aleft i { width: 1px; height: 30px; background: #4e4e4e; margin: 0 10px 0 15px; }
.compass { width: 40px; height: 40px; border-radius: 6px; background: #4b4b4b; display: flex; align-items: center; justify-content: center; }
.compass svg, .acenter svg, .aright svg { stroke: #c4c4c4; stroke-width: 1.8; }
.m1 { margin-left: 20.500px; } .m2 { margin-left: 29px; } .m3 { margin-left: 30px; }
.acenter { display: flex; align-items: center; width: 880px; color: #f2f2f2; }
.acenter .ppl { margin: 0 6px 0 10.500px; stroke: #e0e0e0; }
.acenter small { font-size: 13px; color: #c8c8c8; margin-left: 10px; }
.aright { display: flex; align-items: center; padding-left: 1px; }
.aright svg + svg { margin-left: 22px; }
.aright .dots { fill: #c4c4c4; stroke: none; margin-left: 24px; }
.aright i { width: 1px; height: 30px; background: #d8d8d8; margin: 0 18px 0 23px; }
.aright b { margin-left: 31px; color: #f2f2f2; }

.body { height: 989px; flex: none; display: flex; }
.panel { width: 344px; background: #323232; border-right: 1px solid #464646; padding: 0 25px 0 30px; color: #e8e8e8; }
.ptitle { display: flex; justify-content: space-between; align-items: center; margin-top: 15px; height: 30px; font-size: 19.500px; }
.ptitle b { font-weight: 700; }
.panel p { margin: 25px 0 0; font-size: 16px; line-height: 28px; }
.signin { margin: 24px 0 0 96px; width: 90px; height: 40px; border: 2px solid #565656; border-radius: 20px; display: flex; align-items: center; justify-content: center; font-size: 16px; padding-bottom: 1px; }
.panel hr { border: 0; height: 1px; background: #474747; margin: 25px 0 0; width: 283px; }
.panel h4 { margin: 17px 0 12px; font-size: 13px; font-weight: 400; line-height: 20px; color: #bcbcbc; }
.sug { height: 50.200px; display: flex; align-items: center; padding-left: 9px; font-size: 16px; }
.sug span { margin-left: 19.500px; }

.viewer { width: 1642px; background: #252525; display: flex; align-items: flex-start; overflow: hidden; }
.tools { margin: 20px 0 0 20px; width: 50px; height: 300px; background: #323232; padding: 5px; display: flex; flex-direction: column; gap: 10px; flex: none; }
.tool { width: 40px; height: 40px; border-radius: 5px; }
.tool.on { background: #2680eb; }
.tl { stroke: #c4c4c4; stroke-width: 1.9; }
.tri { fill: #c4c4c4; stroke: none; }
.off .tl { stroke: #757575; } .off .tri { fill: #757575; }
.pages { margin-left: 208px; width: 1150px; display: flex; flex-direction: column; gap: 19px; flex: none; }
.page { overflow: hidden; }
.p2 { margin-left: 10px; }
.scroll { margin-left: auto; width: 19px; height: 989px; background: #2b2b2b; display: flex; flex-direction: column; align-items: center; padding: 5px 0; flex: none; }
.scroll svg { fill: #a0a0a0; }
.scroll i { width: 11px; height: 149px; border-radius: 6px; background: #a0a0a0; margin: 149px 0 auto; }

.scan text { font-family: "Liberation Sans", Arial, sans-serif; font-size: 20.200px; fill: #453f48; }
.scan .b { font-weight: 700; }
.scan .bi { font-weight: 700; font-style: italic; fill: #3a333d; }
.scan .i { font-style: italic; }
.scan .up { fill: #5a535d; }
.scan .dk { fill: #37313a; }
.scan .lt { fill: #918a94; }
.scan .fl { fill: url(#fl); }
.scan .fr { fill: url(#fr); }
.scan .wh { fill: #fff; font-size: 19.500px; }
.scan .sm { font-size: 15px; }
.scan .lg { font-size: 20.500px; }
.scan .head { font-family: "DejaVu Sans Condensed", "DejaVu Sans", sans-serif; font-stretch: condensed; font-weight: 700; font-size: 27px; fill: #2b2830; }
.scan .pale { fill: url(#ttl); }
.scan .soft { fill: url(#ttr); font-size: 23px; }
.second text { font-size: 18.600px; fill: #2b282b; }
.second .cap { font-size: 16px; }
.second .tiny { font-size: 15.500px; }
.second .fp { fill: url(#fp); }
.second .fq { fill: url(#fq); font-size: 17.800px; }
.second .mid { fill: #504d51; font-size: 17.500px; }
.second .lt { fill: #77737a; font-size: 17px; }
.second .n { font-size: 17px; }
.second .bi { fill: #333036; }

.rail { width: 62px; background: #323232; border-left: 1px solid #4d4d4d; display: flex; flex-direction: column; align-items: center; padding-top: 20px; }
.rail svg { stroke: #c4c4c4; stroke-width: 1.9; }
.rail .tri { fill: #c4c4c4; stroke: none; }
.rail i { height: 1px; width: 20px; background: #585858; }
.rail .wide { width: 40px; margin: 20px 0 0; }
.r-grid { margin-top: 28px; }
.pageno { width: 40px; height: 40px; margin-top: 416px; border: 1px solid #b5b5b5; border-radius: 5px; text-align: center; line-height: 38px; font-size: 16px; color: #f0f0f0; }
.total { margin-top: 18px; line-height: 24px; font-size: 16px; color: #d0d0d0; }
.rail .r-up { margin-top: 23px; stroke: #6b6b6b; stroke-width: 2.200; }
.rail .r-dn { margin-top: 39px; stroke-width: 2.200; }
.rail .s1 { margin-top: 26px; }
.r-sun { margin-top: 17px; }
.r-rot { margin-top: 25px; }
.r-fit { margin-top: 24px; }
.rail .s2 { margin-top: 16px; }
.r-zi { margin-top: 20px; }
.r-zo { margin-top: 28px; }

.task { height: 60px; flex: none; background: linear-gradient(90deg, #1f2b29 0, #1e2c2a 250px, #182d30 420px, #182c2f); border-top: 1px solid #3d4848; display: flex; align-items: center; color: #fff; padding-bottom: 1px; }
.weather { display: flex; width: 703px; padding-left: 28px; }
.sun { position: relative; width: 24px; height: 24px; margin-top: 7px; border-radius: 50%; background: linear-gradient(150deg, #f2b52f, #f26a0c 80%); }
.sun em { position: absolute; left: 11px; top: -10px; width: 20px; height: 20px; border-radius: 50%; background: #ff99a4; color: #111; font-size: 13px; line-height: 20px; text-align: center; }
.wtext { margin-left: 12px; font-size: 15px; line-height: 20px; }
.wtext .g { color: #c9cdcc; }
.center { display: flex; align-items: center; width: 1010px; }
.search { width: 274px; height: 40px; margin-left: 17px; border-radius: 20px; background: #35464a; border: 1px solid #45565a; display: flex; align-items: center; padding-left: 13px; font-size: 16px; color: #d5dada; }
.search > svg:first-child { stroke: #e8ecec; stroke-width: 1.900; }
.search span { margin-left: 12px; }
.search .flowers { margin-left: auto; margin-right: 3px; }
.tv { margin-left: 16px; } .word, .exp { margin-left: 25px; } .ppt { margin-left: 24px; }
.center text { font: 700 12px "Open Sans", sans-serif; fill: #fff; }
.wa { position: relative; margin-left: 26px; width: 30px; }
.wa em { position: absolute; left: 16px; top: -6px; width: 20px; height: 20px; border-radius: 50%; background: #69d2dc; color: #142022; font-size: 13px; line-height: 20px; text-align: center; }
.wa i { position: absolute; left: 11px; top: 36px; width: 8px; height: 4px; border-radius: 2px; background: #9ba3a4; }
.chrome { position: relative; width: 50px; height: 50px; margin-left: 15px; border-radius: 6px; background: #263a3d; border: 1px solid #30464a; display: flex; align-items: center; justify-content: center; }
.chrome i { position: absolute; left: 14px; bottom: 0; width: 20px; height: 4px; border-radius: 2px; background: #69d2dc; }
.tray { display: flex; align-items: center; font-size: 15px; line-height: 20px; }
.caret { stroke: #fff; stroke-width: 1.900; }
.cloud { margin-left: 22px; }
.lang { width: 60px; margin-left: 8px; text-align: center; }
.wifi, .vol, .bat { stroke: #fff; stroke-width: 1.500; }
.wifi { margin-left: 7px; } .vol { margin-left: 9px; } .bat { margin-left: 11px; }
.clock { width: 90px; margin-left: 7px; text-align: right; }
</style>
